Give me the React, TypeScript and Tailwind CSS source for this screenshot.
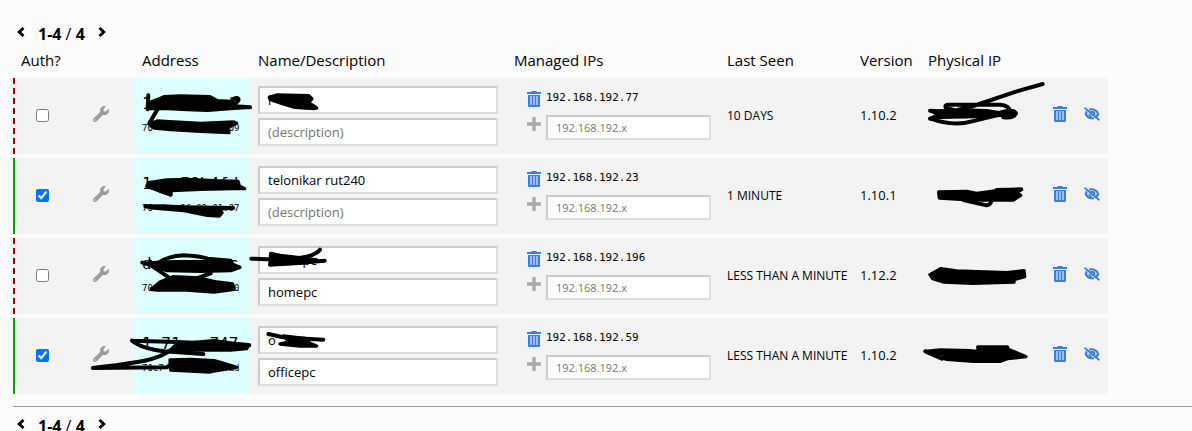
import { FaWrench } from "react-icons/fa";

type Mark = { fill?: string; lines?: string };

type Member = {
  id: string;
  authorized: boolean;
  address: string;
  mac: string;
  name: string;
  description: string;
  ip: string;
  lastSeen: string;
  version: string;
  physicalIp: string;
  addressMark: Mark;
  nameMark?: Mark;
  physicalMark: Mark;
};

const members: Member[] = [
  {
    id: "m1",
    authorized: false,
    address: "1 90     3",
    mac: "70             :09",
    name: "l       e",
    description: "",
    ip: "192.168.192.77",
    lastSeen: "10 DAYS",
    version: "1.10.2",
    physicalIp: "",
    addressMark: {
      fill: "M46 74L72 64L92 56L140 54L228 56L250 68L292 70L300 86L348 88L290 92L220 97L160 95L100 92L48 92Z M45 138L70 129L120 132L200 136L300 132L308 136L280 148L285 164L200 160L110 155L60 150Z",
      lines: "M43 52L41 94 M294 72Q296 60 310 60Q320 66 302 78 M290 84L348 88 M74 88L46 136",
    },
    nameMark: { fill: "M58 58L80 51L176 53L186 62L176 74L200 90L192 92L135 88L95 76L60 64Z" },
    physicalMark: {
      fill: "M34 100L80 98L130 96L200 98L236 104L276 104L282 112L240 112L170 116L60 118L32 122L56 110Z",
      lines: "M368 18L290 40L160 84L80 104 M30 98L110 104 M100 96L78 90Q72 80 88 80L240 80Q268 82 270 100 M30 122L60 112 M32 122Q100 146 156 130L230 112 M240 104Q280 92 288 106Q280 122 250 118",
    },
  },
  {
    id: "m2",
    authorized: true,
    address: "1   59b4fd",
    mac: "70    c6f:89:01:97",
    name: "telonikar rut240",
    description: "",
    ip: "192.168.192.23",
    lastSeen: "1 MINUTE",
    version: "1.10.1",
    physicalIp: "",
    addressMark: {
      fill: "M38 84L44 74L98 66L160 64L240 68L312 70L316 84L332 92L298 92L200 94L112 98L110 110L78 100L50 88Z M34 145L90 144L160 148L298 150L240 154L264 164L256 174L220 172L150 158L60 150Z",
      lines: "M50 88Q82 98 110 110 M34 145L90 147L296 150",
    },
    physicalMark: {
      fill: "M56 102L140 100L170 106L230 98L304 94L290 104L302 112L280 126L160 126L58 120Z",
      lines: "M130 126L200 142Q210 142 215 128 M230 96L304 94",
    },
  },
  {
    id: "m3",
    authorized: false,
    address: "d        c",
    mac: "70              :0",
    name: "hom  pc",
    description: "homepc",
    ip: "192.168.192.196",
    lastSeen: "LESS THAN A MINUTE",
    version: "1.12.2",
    physicalIp: "",
    addressMark: {
      fill: "M55 74L120 71L290 70L298 80L318 88L290 98L200 100L100 98L55 86Z M52 154L78 132L118 116L198 120L248 132L296 138L300 154L240 162L158 156L68 156Z",
      lines: "M25 74L60 84Q100 52 150 52Q200 54 220 62L290 68 M60 88L104 118 M230 106L196 118 M48 70L60 84",
    },
    nameMark: {
      fill: "M62 46L90 52L124 56L200 66L150 76L60 78Z",
      lines: "M4 62L110 66L170 56Q200 48 210 35 M60 80L150 74L224 68",
    },
    physicalMark: {
      fill: "M30 110L62 92L110 99L260 104L312 98L314 116L284 124L282 132L160 136L70 132L38 122Z",
    },
  },
  {
    id: "m4",
    authorized: true,
    address: "1 71   747",
    mac: "70c7           :ad",
    name: "o     ",
    description: "officepc",
    ip: "192.168.192.59",
    lastSeen: "LESS THAN A MINUTE",
    version: "1.10.2",
    physicalIp: "",
    addressMark: {
      fill: "M128 78L240 68L300 76L344 80L338 92L290 96L220 96L120 96Z M108 126L170 124L240 128L262 134L308 148L235 160L228 162L110 156Z",
      lines: "M-6 68L130 72L346 82 M-6 68Q20 90 90 100L208 108 M130 76Q100 118 10 132Q-50 142 -124 150L98 148L120 132",
    },
    nameMark: {
      fill: "M100 54L168 62L180 76L200 84L150 84L90 78L120 72Z",
      lines: "M55 48Q90 58 130 60L220 65",
    },
    physicalMark: {
      fill: "M176 92L256 90L290 104L318 116L262 122L240 130L160 130L80 124L66 120L120 110L46 108L16 100L60 96L150 98L170 100Z",
      lines: "M16 100L66 122 M174 88L262 88",
    },
  },
];

function Scribble({ mark }: { mark: Mark }) {
  return (
    <svg
      aria-hidden="true"
      viewBox="0 0 348 228"
      className="pointer-events-none absolute top-0 left-0 z-10 h-[76px] w-[116px] overflow-visible"
      stroke="#000"
      strokeLinecap="round"
      strokeLinejoin="round"
    >
      {mark.fill && <path d={mark.fill} fill="#000" strokeWidth="10" />}
      {mark.lines && <path d={mark.lines} fill="none" strokeWidth="12" />}
    </svg>
  );
}

function TrashIcon() {
  return (
    <svg aria-hidden="true" viewBox="0 0 14 16" className="h-4 w-3.5" fill="#367fe0">
      <path d="M4.5 0h5v1H14v2H0V1h4.500z" />
      <path d="M1 4h12v11a1 1 0 0 1-1 1H2a1 1 0 0 1-1-1z" />
      <path d="M3 5h2v9H3zM6 5h2v9H6zM9 5h2v9H9z" fill="#9cc0f0" />
    </svg>
  );
}

function PlusIcon() {
  return (
    <svg aria-hidden="true" viewBox="0 0 14 14" className="size-3.5" fill="#aaa">
      <path d="M5.300 0h3.400v5.300H14v3.400H8.700V14H5.300V8.700H0V5.300h5.300z" />
    </svg>
  );
}

function HideIcon() {
  return (
    <svg aria-hidden="true" viewBox="0 0 16 14" className="h-3.5 w-4" fill="none" stroke="#367fe0">
      <path d="M5.200 2.600Q8 1.800 10.600 2.900Q13.200 4 14.200 7Q13.500 8.700 12.200 9.900" strokeWidth="2.200" />
      <path d="M3 4.400Q2.100 5.600 1.800 7Q3.300 10.600 7 11.200Q8.800 11.400 10 11" strokeWidth="2.200" />
      <path d="M6.800 5.200Q8.500 4.200 10 5.600Q10.900 6.700 10.300 8" strokeWidth="1.800" />
      <path d="M5.300 6.600Q5.200 9 7.800 9.400" strokeWidth="1.800" />
      <path d="M0.500 0.800L15.500 13.200" strokeWidth="1.800" />
    </svg>
  );
}

function Chevron({ next = false }: { next?: boolean }) {
  return (
    <svg aria-hidden="true" viewBox="0 0 8 10" className="h-2.5 w-2" fill="none" stroke="#000" strokeWidth="2.800">
      <path d={next ? "M1.500 1L5.800 5L1.500 9" : "M6.500 1L2.200 5L6.500 9"} />
    </svg>
  );
}

function Pager() {
  return (
    <nav aria-label="Members pages" className="flex h-6 items-center pl-1 text-[16px]">
      <button type="button" aria-label="Previous page" className="-mt-1 mr-[13px] h-4">
        <Chevron />
      </button>
      <span>
        <b>1-4</b> / <b>4</b>
      </span>
      <button type="button" aria-label="Next page" className="-mt-1 ml-[13px] h-4">
        <Chevron next />
      </button>
    </nav>
  );
}

const field =
  "block w-full border-2 border-t-[#ccc] border-r-[#ddd] border-b-[#ddd] border-l-[#ccc] bg-white px-2 placeholder:text-[#757575]";

function MemberRow({ m }: { m: Member }) {
  return (
    <tr className="h-[76px] bg-[#f3f3f3]">
      <td
        className={
          m.authorized
            ? "border-l-2 border-solid border-[#00a800] pb-0.5 pl-[21px]"
            : "border-l-2 border-dashed border-[#a80000] pb-0.5 pl-[21px]"
        }
      >
        <input
          type="checkbox"
          aria-label="Authorized"
          defaultChecked={m.authorized}
          className="block size-[13px]"
        />
      </td>
      <td className="pb-1 pl-2">
        <button type="button" aria-label="Member settings" className="block">
          <FaWrench className="size-4 text-[#999]" />
        </button>
      </td>
      <td className="relative bg-[#dff] pl-2 font-['DejaVu_Sans_Mono',monospace] whitespace-pre">
        <div className="text-[16px] leading-6">{m.address}</div>
        <div className="text-[9px] leading-6">{m.mac}</div>
        <Scribble mark={m.addressMark} />
      </td>
      <td className="relative px-2">
        <div className="flex flex-col gap-1 text-[13px]">
          <input aria-label="Name" defaultValue={m.name} className={`${field} h-7`} />
          <input
            aria-label="Description"
            placeholder="(description)"
            defaultValue={m.description}
            className={`${field} h-7`}
          />
        </div>
        {m.nameMark && <Scribble mark={m.nameMark} />}
      </td>
      <td className="pr-2 pb-0.5 pl-[21px]">
        <div className="flex gap-[5px]">
          <button type="button" aria-label="Remove IP">
            <TrashIcon />
          </button>
          <span className="font-['DejaVu_Sans_Mono',monospace] text-[11px] leading-[14px]">{m.ip}</span>
        </div>
        <div className="mt-2 flex items-start gap-[5px]">
          <button type="button" aria-label="Add IP" className="mt-0.5">
            <PlusIcon />
          </button>
          <input
            aria-label="New managed IP"
            placeholder="192.168.192.x"
            className={`${field} h-[25px] min-w-0 flex-1 text-[11px]`}
          />
        </div>
      </td>
      <td className="pl-2 text-[12px] whitespace-nowrap">{m.lastSeen}</td>
      <td className="pl-2 text-[13px]">{m.version}</td>
      <td className="relative pl-2 text-[13px]">
        {m.physicalIp}
        <Scribble mark={m.physicalMark} />
      </td>
      <td className="pb-1 pl-2">
        <button type="button" aria-label="Delete member" className="block">
          <TrashIcon />
        </button>
      </td>
      <td className="pb-1 pl-2">
        <button type="button" aria-label="Hide member" className="block">
          <HideIcon />
        </button>
      </td>
    </tr>
  );
}

export default function App() {
  return (
    <main className="min-h-screen bg-[#fbfbfb] pt-[22px] pl-[13px] font-['Open_Sans',sans-serif] text-black">
      <Pager />
      <table className="-mt-1 w-full max-w-[1095px] table-fixed border-separate border-spacing-x-0 border-spacing-y-1 text-left">
        <colgroup>
          <col className="w-[72px]" />
          <col className="w-[49px]" />
          <col className="w-[116px]" />
          <col className="w-[256px]" />
          <col className="w-[213px]" />
          <col className="w-[133px]" />
          <col className="w-[68px]" />
          <col className="w-[125px]" />
          <col className="w-[31px]" />
          <col className="w-[32px]" />
        </colgroup>
        <thead>
          <tr className="h-7 text-[15px] whitespace-nowrap [&>th]:pl-2 [&>th]:font-normal">
            <th>Auth?</th>
            <th />
            <th>Address</th>
            <th>Name/Description</th>
            <th>Managed IPs</th>
            <th>Last Seen</th>
            <th>Version</th>
            <th>Physical IP</th>
            <th />
            <th />
          </tr>
        </thead>
        <tbody>
          {members.map((m) => (
            <MemberRow key={m.id} m={m} />
          ))}
        </tbody>
      </table>
      <hr className="mt-2 mb-[7px] border-[#999]" />
      <Pager />
    </main>
  );
}
